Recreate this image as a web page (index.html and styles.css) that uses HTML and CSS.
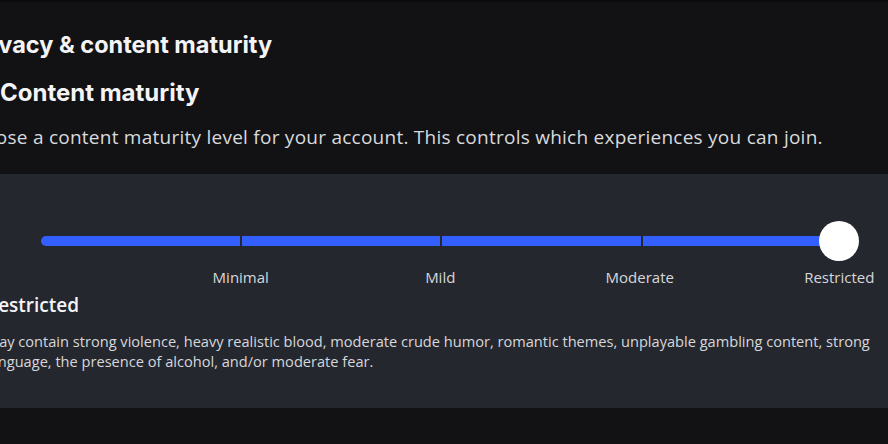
FILE: index.html
```html
<!DOCTYPE html>
<html lang="en">
<head>
<meta charset="utf-8">
<link rel="stylesheet" href="styles.css">
<title>Content maturity</title>
</head>
<body>
<div class="page">
  <h1 class="title">Privacy &amp; content maturity</h1>
  <h2 class="section-title">Content maturity</h2>
  <p class="lead">Choose a content maturity level for your account. This controls which experiences you can join.</p>
  <div class="panel">
    <div class="slider">
      <div class="track">
        <span class="seg seg-first"></span>
        <span class="seg"></span>
        <span class="seg"></span>
        <span class="seg seg-last"></span>
      </div>
      <span class="thumb"></span>
    </div>
    <div class="labels">
      <span>Minimal</span>
      <span>Mild</span>
      <span>Moderate</span>
      <span>Restricted</span>
    </div>
    <h3 class="level">Restricted</h3>
    <p class="level-desc">May contain strong violence, heavy realistic blood, moderate crude humor, romantic themes, unplayable gambling content, strong language, the presence of alcohol, and/or moderate fear.</p>
  </div>
</div>
</body>
</html>
```

FILE: styles.css
```css
html, body {
  margin: 0;
  padding: 0;
  background: #121215;
  overflow: hidden;
}
body {
  border-top: 2px solid #0a0a0c;
  height: 442px;
  font-family: "Open Sans", "Liberation Sans", sans-serif;
  color: #f4f4f6;
}
.page {
  margin-left: -40px;
  width: 1000px;
  display: flex;
  flex-direction: column;
}
.title {
  margin: 28px 0 0 7px;
  font-size: 23.5px;
  line-height: 30px;
  font-weight: 700;
  font-family: "Inter", "Open Sans", sans-serif;
}
.section-title {
  margin: 18px 0 0 40px;
  font-size: 24px;
  line-height: 30px;
  font-weight: 700;
  font-family: "Inter", "Open Sans", sans-serif;
}
.lead {
  margin: 16px 0 0 0;
  font-size: 19px;
  line-height: 26px;
  letter-spacing: 0.25px;
  color: #d9dadd;
}
.panel {
  margin: 24px 0 0 0;
  height: 234px;
  box-sizing: border-box;
  background: #25272e;
  padding: 47px 0 0 26px;
  display: flex;
  flex-direction: column;
}
.slider {
  position: relative;
  margin-left: 55px;
  width: 818px;
  height: 40px;
  display: flex;
  align-items: center;
}
.track {
  display: flex;
  gap: 2px;
  width: 800px;
  height: 10px;
}
.seg {
  flex: 1;
  background: #335fff;
}
.seg-first {
  border-radius: 5px 0 0 5px;
}
.thumb {
  position: absolute;
  left: 778px;
  top: 0;
  width: 40px;
  height: 40px;
  border-radius: 50%;
  background: #ffffff;
}
.labels {
  margin: 6px 0 0 155px;
  display: grid;
  grid-template-columns: repeat(4, 199.5px);
  justify-items: center;
  font-size: 15px;
  line-height: 20px;
  color: #d6d7db;
}
.level {
  margin: 6px 0 0 0;
  font-size: 19px;
  line-height: 24px;
  font-weight: 600;
}
.level-desc {
  margin: 14px 0 0 0;
  width: 900px;
  font-size: 14.6px;
  line-height: 20px;
  color: #d6d7db;
}
```
